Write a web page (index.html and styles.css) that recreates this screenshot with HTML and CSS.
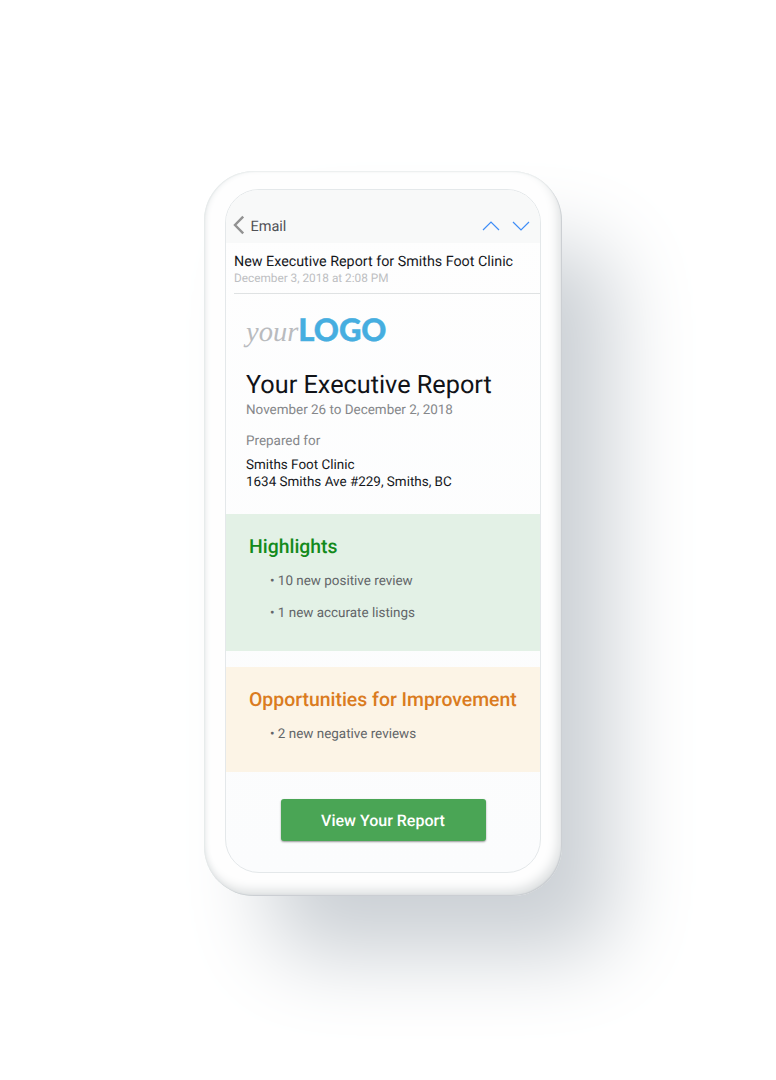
FILE: index.html
```html
<!DOCTYPE html>
<html lang="en">
<head>
<meta charset="utf-8">
<title>Executive Report</title>
<link rel="stylesheet" href="styles.css">
</head>
<body>
<div class="phone">
  <main class="screen">
    <header class="nav">
      <svg class="back" width="12" height="20" viewBox="0 0 12 20"><path d="M10.200 1.600 2 10l8.200 8.400"/></svg>
      <span class="nav-title">Email</span>
      <svg class="arrow" width="18" height="12" viewBox="0 0 18 12"><path d="M1 10 9 2l8 8"/></svg>
      <svg class="arrow" width="18" height="12" viewBox="0 0 18 12"><path d="M1 2l8 8 8-8"/></svg>
    </header>
    <section class="subject">
      <h1 class="subject-title">New Executive Report for Smiths Foot Clinic</h1>
      <p class="subject-date">December 3, 2018 at 2:08 PM</p>
    </section>
    <section class="intro">
      <div class="logo"><span class="logo-your">your</span><span class="logo-word">LOGO</span></div>
      <h2 class="title">Your Executive Report</h2>
      <p class="range">November 26 to December 2, 2018</p>
      <p class="prepared">Prepared for</p>
      <p class="client">Smiths Foot Clinic<br><span class="address">1634 Smiths Ave #229, Smiths, BC</span></p>
    </section>
    <section class="card highlights">
      <h3 class="card-title">Highlights</h3>
      <p class="item">• 10 new positive review</p>
      <p class="item">• 1 new accurate listings</p>
    </section>
    <section class="card opportunities">
      <h3 class="card-title">Opportunities for Improvement</h3>
      <p class="item">• 2 new negative reviews</p>
    </section>
    <a class="button">View Your Report</a>
  </main>
</div>
</body>
</html>
```
FILE: styles.css
```css
* { box-sizing: border-box; }
body {
  margin: 0;
  height: 1080px;
  padding: 171px 0 0 203.500px;
  background: #fff;
  font-family: Roboto, "Liberation Sans", sans-serif;
  text-rendering: geometricPrecision;
  overflow: hidden;
}
h1, h2, h3, p { margin: 0; font-weight: 400; white-space: nowrap; }
.phone {
  width: 358px;
  height: 724.500px;
  padding: 18px 20px 22px 21.500px;
  border-radius: 50px;
  background: #fefefe;
  box-shadow:
    inset -1px -1px 1px #c9cdd1,
    inset 1px 0 1px #e6eaea,
    inset 0 1px 1px #edf0f0,
    inset -5px -7px 12px -2px #d9dcdd,
    inset 3px 0 7px -3px #dde1e3,
    58px 67px 84px -8px #cbd0d5;
}
.screen {
  display: flex;
  flex-direction: column;
  width: 316px;
  height: 684px;
  border: 1px solid #e4e8ea;
  border-radius: 34px;
  background: linear-gradient(#fefefe, #fbfcfd);
  overflow: hidden;
}
.nav {
  display: flex;
  align-items: center;
  height: 53px;
  padding: 19px 10px 0 7px;
  background: #f8f9f9;
}
.nav svg { fill: none; }
.back { margin-top: -2px; stroke: #929292; stroke-width: 2.400; }
.nav-title { margin: 1px auto 0 5.500px; color: #505156; font-size: 14.500px; line-height: 18px; }
.arrow { stroke: #3f8ef7; stroke-width: 1.200; }
.arrow + .arrow { margin-left: 12.500px; }
.subject { height: 51px; margin-left: 8px; padding-top: 11px; border-bottom: 1px solid #dfe2e3; }
.subject-title { color: #15171c; font-size: 14.300px; line-height: 17px; }
.subject-date { color: #bdbfc2; font-size: 11.800px; line-height: 15px; }
.intro { height: 220px; padding: 17px 0 0 20px; }
.logo { display: flex; align-items: baseline; height: 56px; line-height: 36px; }
.logo-your { color: #b9bbbe; font-family: "Liberation Serif", serif; font-style: italic; font-size: 28.500px; }
.logo-word { color: #46aee0; font-family: Lato, sans-serif; font-weight: 900; font-size: 31px; -webkit-text-stroke: .4px #46aee0; }
.title { color: #111318; font-size: 25.250px; line-height: 38px; }
.range, .prepared { color: #85878a; font-size: 13.450px; line-height: 16px; }
.range { margin-top: -2px; }
.prepared { margin-top: 15px; }
.client { margin-top: 7px; color: #15171b; font-size: 13.450px; line-height: 17px; }
.card { padding: 20.500px 0 0 23px; }
.highlights { height: 137px; background: #e3f1e6; }
.opportunities { height: 105px; margin-top: 16px; background: #fcf4e6; }
.card-title { margin-bottom: 10px; font-size: 19.400px; font-weight: 500; line-height: 24px; }
.highlights .card-title { color: #138a1b; }
.opportunities .card-title { color: #da7b20; }
.item { margin: 0 0 7px 21px; color: #626568; font-size: 13.450px; line-height: 25px; }
.button {
  width: 205px;
  height: 42px;
  margin: 27px 0 0 54.500px;
  border-radius: 3px;
  background: #4aa555;
  box-shadow: 0 1px 2px rgba(0, 0, 0, .4);
  color: #fff;
  font-size: 16px;
  font-weight: 500;
  line-height: 43px;
  text-align: center;
}
```
